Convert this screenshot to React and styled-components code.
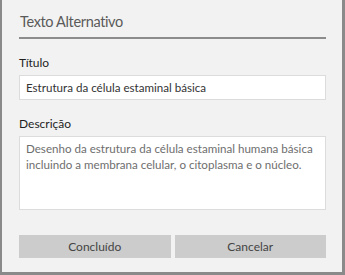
import React, {useState} from 'react';
import styled, {createGlobalStyle} from 'styled-components';

const GlobalStyle = createGlobalStyle`
  html, body {
    margin: 0;
    padding: 0;
    background: #f2f2f2;
  }
  * {
    box-sizing: border-box;
  }
`;

const Panel = styled.div`
  width: 345px;
  height: 275px;
  background: #f2f2f2;
  border-left: 2px solid #8a8a8a;
  border-right: 3px solid #8a8a8a;
  border-bottom: 3px solid #8a8a8a;
  padding: 12px 16px 0 17px;
  display: flex;
  flex-direction: column;
  font-family: Lato, "Noto Sans", sans-serif;
`;

const Header = styled.h1`
  margin: 0;
  font-size: 14.5px;
  font-weight: 400;
  letter-spacing: -0.35px;
  line-height: 20px;
  color: #5a5a5a;
  padding: 0 0 5px 1px;
  border-bottom: 2px solid #8c8c8c;
`;

const Field = styled.div`
  display: flex;
  flex-direction: column;
  margin-top: ${p => p.top}px;
`;

const Label = styled.label`
  font-size: 12px;
  line-height: 18px;
  color: #1f1f1f;
  margin-bottom: 3px;
`;

const Input = styled.input`
  height: 25px;
  border: 1px solid #dcdcdc;
  background: #fff;
  padding: 0 6px;
  font-family: inherit;
  font-size: 11.6px;
  color: #333;
  outline: none;
`;

const TextArea = styled.textarea`
  height: 74px;
  border: 1px solid #dcdcdc;
  background: #fff;
  padding: 4px 6px;
  font-family: inherit;
  font-size: 11.6px;
  line-height: 15.5px;
  color: #6e6e6e;
  resize: none;
  outline: none;
`;

const Actions = styled.div`
  display: grid;
  grid-template-columns: 1fr 1fr;
  gap: 4px;
  margin-top: 25px;
`;

const Button = styled.button`
  height: 23px;
  border: none;
  background: #cccccc;
  font-family: inherit;
  font-size: 12px;
  color: #444;
  padding: 0;
  cursor: pointer;
`;

const App = () => {
  const [title, setTitle] = useState('Estrutura da célula estaminal básica');
  const [desc, setDesc] = useState('Desenho da estrutura da célula estaminal humana básica incluindo a membrana celular, o citoplasma e o núcleo.');

  return (
    <>
      <GlobalStyle />
      <Panel>
        <Header>Texto Alternativo</Header>
        <Field top={15}>
          <Label>Título</Label>
          <Input value={title} onChange={e => setTitle(e.target.value)} />
        </Field>
        <Field top={15}>
          <Label>Descrição</Label>
          <TextArea value={desc} onChange={e => setDesc(e.target.value)} />
        </Field>
        <Actions>
          <Button>Concluído</Button>
          <Button>Cancelar</Button>
        </Actions>
      </Panel>
    </>
  );
};

export default App;
